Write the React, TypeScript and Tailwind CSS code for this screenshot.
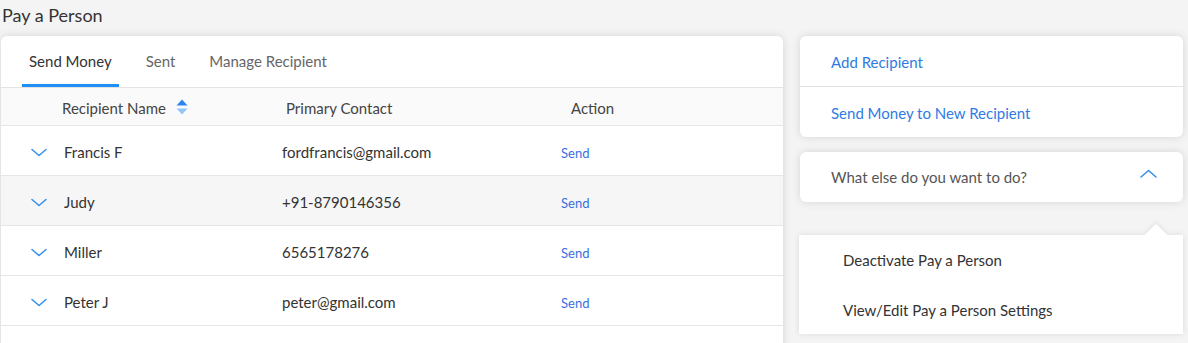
import React from "react";

const rows = [
  { name: "Francis F", contact: "fordfrancis@gmail.com", hl: false },
  { name: "Judy", contact: "+91-8790146356", hl: true },
  { name: "Miller", contact: "6565178276", hl: false },
  { name: "Peter J", contact: "peter@gmail.com", hl: false },
];

function ChevronDown() {
  return (
    <svg width="16" height="9" viewBox="0 0 16 9" fill="none">
      <path d="M1 1.5L8 7.5L15 1.5" stroke="#2f8ff0" strokeWidth="1.5" strokeLinecap="round" strokeLinejoin="round" />
    </svg>
  );
}

function ChevronUp() {
  return (
    <svg width="17" height="9" viewBox="0 0 17 9" fill="none">
      <path d="M1 8L8.5 1.5L16 8" stroke="#2f8ff0" strokeWidth="1.5" strokeLinecap="round" strokeLinejoin="round" />
    </svg>
  );
}

function SortIcon() {
  return (
    <svg width="12" height="16" viewBox="0 0 12 16">
      <path d="M6 0.5L11.5 6.5H0.5Z" fill="#2b87ee" />
      <path d="M6 15.5L11.5 9.5H0.5Z" fill="#94c6f7" />
    </svg>
  );
}

export default function App() {
  return (
    <div
      className="w-[1188px] h-[343px] overflow-hidden bg-[#f4f4f4] text-[#333]"
      style={{ fontFamily: "Lato, 'Noto Sans', sans-serif" }}
    >
      <div className="h-[36px] pl-[2px] text-[18px] leading-[30px] text-[#333]">Pay a Person</div>
      <div className="flex items-start">
        <div className="ml-[1px] w-[782px] h-[320px] bg-white rounded-t-[6px] shadow-[0_0_8px_rgba(0,0,0,0.13)]">
          <div className="h-[52px] flex items-end pl-[21px] gap-[20px] border-b border-[#e3e3e3]">
            <div className="px-[7px] h-[51px] flex items-center text-[15px] text-[#333] border-b-[3px] border-[#1e8ff5] pt-[3px]">
              Send Money
            </div>
            <div className="px-[7px] h-[51px] flex items-center text-[15px] text-[#666]">Sent</div>
            <div className="px-[7px] h-[51px] flex items-center text-[15px] text-[#666]">Manage Recipient</div>
          </div>
          <div className="h-[38px] flex items-center pt-[3px] bg-[#fafafa] border-b border-[#e6e6e6] text-[15px] text-[#444]">
            <div className="w-[285px] pl-[61px] flex items-center gap-[10px]">
              Recipient Name{" "}
              <span className="-mt-[3px]">
                <SortIcon />
              </span>
            </div>
            <div className="w-[285px]">Primary Contact</div>
            <div>Action</div>
          </div>
          {rows.map((r) => (
            <div
              key={r.name}
              className={`h-[50px] flex items-center pt-[3px] border-b border-[#e6e6e6] text-[15px] text-[#333] ${r.hl ? "bg-[#f6f6f6]" : "bg-white"}`}
            >
              <div className="w-[63px] pl-[30px] flex items-center">
                <ChevronDown />
              </div>
              <div className="w-[218px]">{r.name}</div>
              <div className="w-[279px]">{r.contact}</div>
              <div className="text-[13px] text-[#3a6fe0] pt-[3px]">Send</div>
            </div>
          ))}
        </div>
        <div className="ml-[17px] w-[383px] flex flex-col">
          <div className="bg-white rounded-[6px] shadow-[0_0_8px_rgba(0,0,0,0.13)]">
            <div className="h-[51px] flex items-center pl-[31px] pt-[2px] text-[15px] text-[#2f7be3] border-b border-[#e3e3e3]">
              Add Recipient
            </div>
            <div className="h-[50px] flex items-center pl-[31px] pt-[2px] text-[15px] text-[#2f7be3]">
              Send Money to New Recipient
            </div>
          </div>
          <div className="mt-[15px] h-[50px] bg-white rounded-[6px] shadow-[0_0_8px_rgba(0,0,0,0.13)] flex items-center justify-between pl-[31px] pr-[26px] text-[15px] text-[#555]">
            <span>What else do you want to do?</span>
            <span className="-mt-[8px]">
              <ChevronUp />
            </span>
          </div>
          <div className="relative mt-[33px] -ml-[1px] w-[384px] h-[99px] bg-white shadow-[0_0_6px_rgba(0,0,0,0.1)]">
            <div className="absolute right-[19px] -top-[8px] w-[16px] h-[16px] bg-white rotate-45 shadow-[-2px_-2px_4px_rgba(0,0,0,0.05)]" />
            <div className="relative h-[50px] flex items-center pl-[44px] text-[15px] text-[#333]">
              Deactivate Pay a Person
            </div>
            <div className="relative h-[49px] flex items-center pl-[44px] pt-[2px] text-[15px] text-[#333]">
              View/Edit Pay a Person Settings
            </div>
          </div>
        </div>
      </div>
    </div>
  );
}
